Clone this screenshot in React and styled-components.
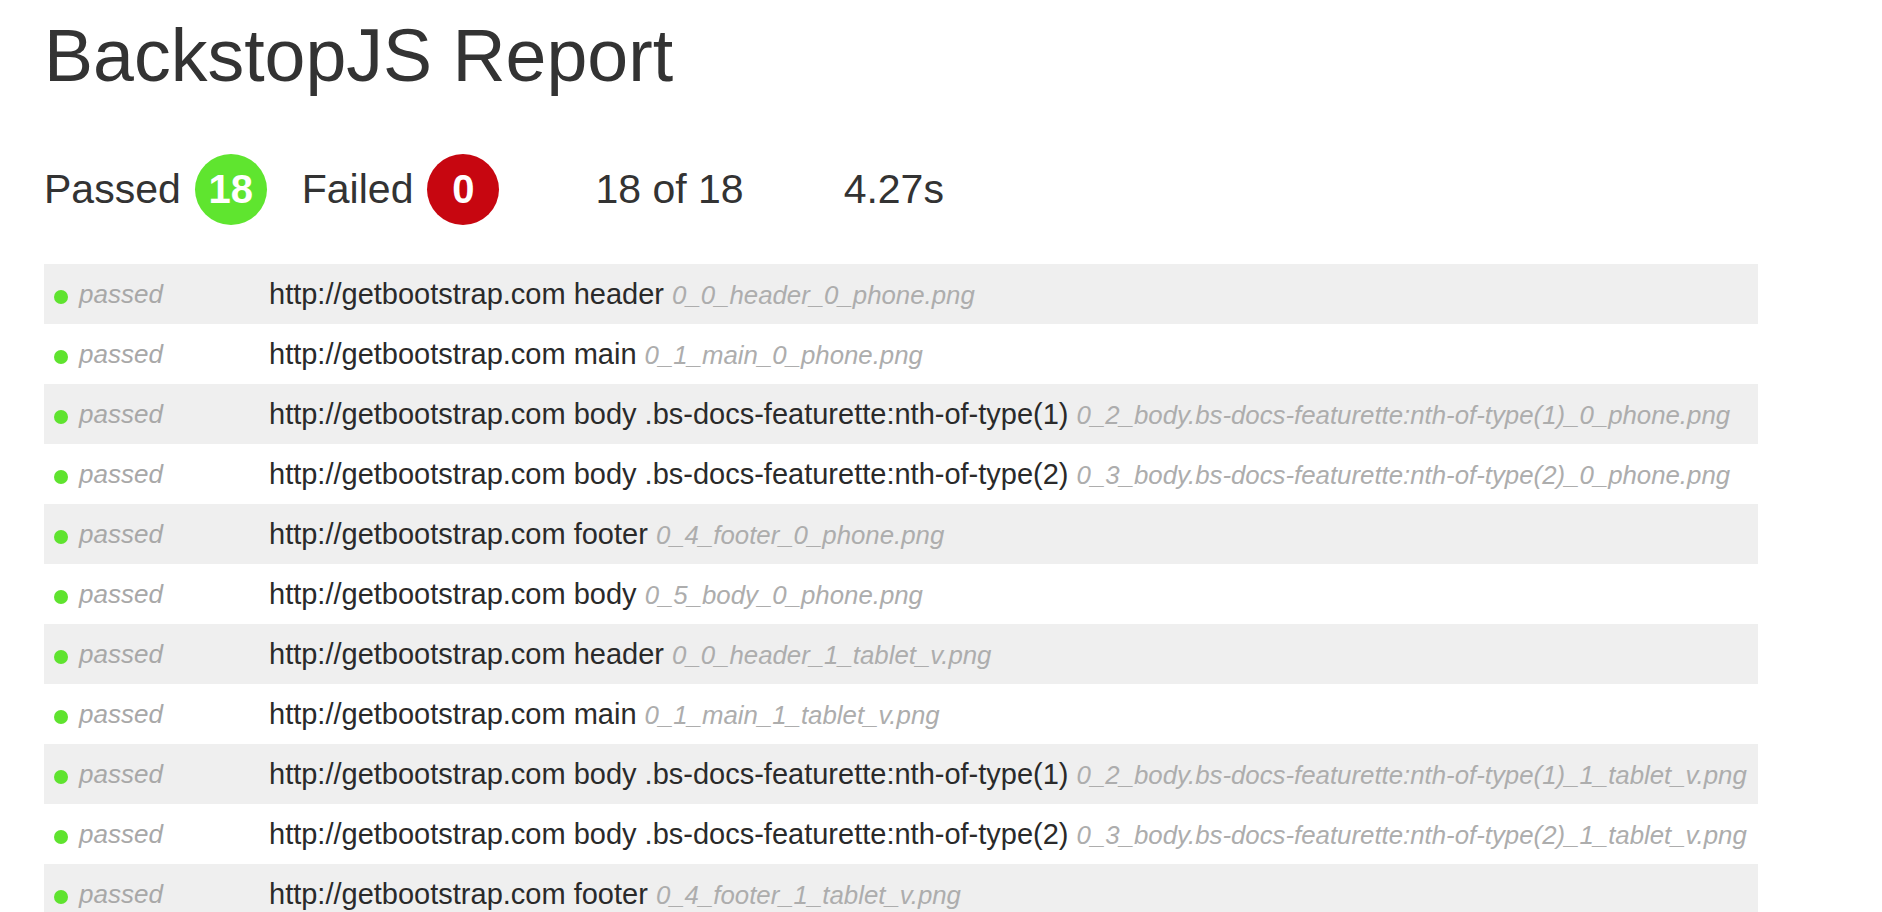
import React from "react";
import styled, { createGlobalStyle } from "styled-components";

const GlobalStyle = createGlobalStyle`
  html, body {
    margin: 0;
    padding: 0;
    background: #ffffff;
    font-family: "Liberation Sans", Arial, Helvetica, sans-serif;
    color: #333333;
  }
`;

const Page = styled.div`
  padding: 15px 124px 40px 44px;
`;

const Title = styled.h1`
  margin: 0;
  font-size: 73.5px;
  font-weight: 400;
  line-height: 82px;
  color: #333333;
`;

const Stats = styled.div`
  display: flex;
  align-items: center;
  height: 70px;
  margin-top: 57px;
  font-size: 41px;
  color: #333333;
`;

const Stat = styled.div`
  display: flex;
  align-items: center;
  gap: 14px;
  margin-right: ${(p) => p.$gap || 0}px;
`;

const Badge = styled.span`
  display: inline-flex;
  align-items: center;
  justify-content: center;
  width: 72px;
  height: 71px;
  border-radius: 50%;
  background: ${(p) => p.$color};
  color: #ffffff;
  font-weight: 700;
  font-size: 40px;
`;

const Plain = styled.span`
  margin-right: ${(p) => p.$gap || 0}px;
`;

const List = styled.div`
  margin-top: 40px;
  display: flex;
  flex-direction: column;
`;

const Row = styled.div`
  display: grid;
  grid-template-columns: 225px 1fr;
  align-items: center;
  height: 60px;
  background: ${(p) => (p.$shade ? "#efefef" : "#ffffff")};
`;

const Status = styled.div`
  display: flex;
  align-items: center;
  padding-left: 10px;
`;

const Dot = styled.span`
  width: 14px;
  height: 14px;
  border-radius: 50%;
  background: #5fe32f;
  margin-right: 11px;
  margin-top: 6px;
  flex: none;
`;

const StatusText = styled.span`
  font-style: italic;
  font-weight: 300;
  font-size: 26px;
  color: #a8a8a8;
`;

const Label = styled.div`
  font-size: 29px;
  color: #2a2a2a;
  white-space: nowrap;
`;

const FileName = styled.span`
  font-style: italic;
  font-weight: 300;
  font-size: 25.8px;
  color: #adadad;
`;

const selectors = [
  ["header", "0_header"],
  ["main", "1_main"],
  ["body .bs-docs-featurette:nth-of-type(1)", "2_body.bs-docs-featurette:nth-of-type(1)"],
  ["body .bs-docs-featurette:nth-of-type(2)", "3_body.bs-docs-featurette:nth-of-type(2)"],
  ["footer", "4_footer"],
  ["body", "5_body"],
];

const viewports = ["0_phone", "1_tablet_v", "2_tablet_h"];

const rows = [];
viewports.forEach((vp) => {
  selectors.forEach(([sel, file]) => {
    rows.push({
      label: `http://getbootstrap.com ${sel}`,
      file: `0_${file}_${vp}.png`,
    });
  });
});

export default function App() {
  return (
    <>
      <GlobalStyle />
      <Page>
        <Title>BackstopJS Report</Title>
        <Stats>
          <Stat $gap={35}>
            <span>Passed</span>
            <Badge $color="#5fe52f">18</Badge>
          </Stat>
          <Stat $gap={96}>
            <span>Failed</span>
            <Badge $color="#c70610">0</Badge>
          </Stat>
          <Plain $gap={100}>18 of 18</Plain>
          <Plain>4.27s</Plain>
        </Stats>
        <List>
          {rows.map((r, i) => (
            <Row key={i} $shade={i % 2 === 0}>
              <Status>
                <Dot />
                <StatusText>passed</StatusText>
              </Status>
              <Label>
                {r.label} <FileName>{r.file}</FileName>
              </Label>
            </Row>
          ))}
        </List>
      </Page>
    </>
  );
}
